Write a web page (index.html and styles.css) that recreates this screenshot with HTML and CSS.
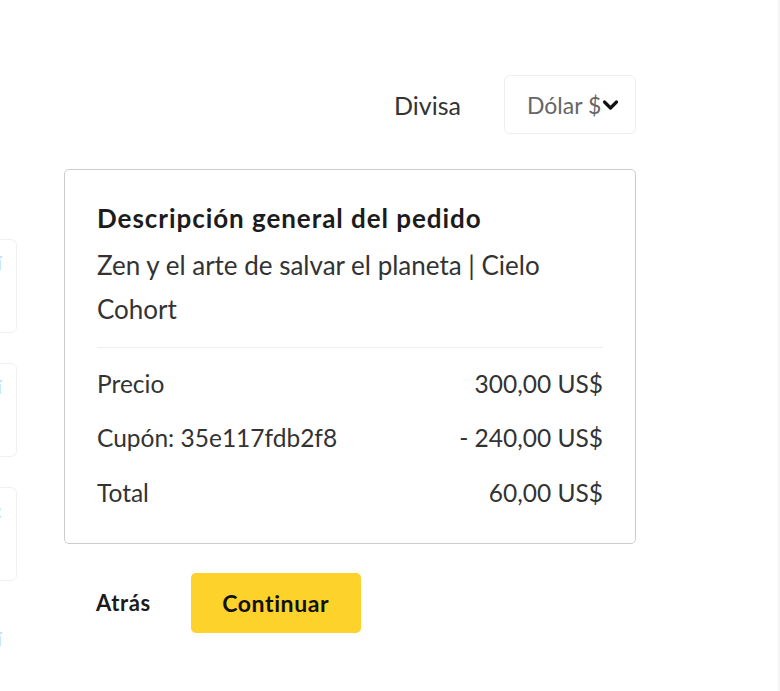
FILE: index.html
```html
<!DOCTYPE html>
<html lang="es">
<head>
<meta charset="utf-8">
<title>Pedido</title>
<link rel="stylesheet" href="styles.css">
</head>
<body>
<div class="page">
  <main class="main">
    <div class="currency-row">
      <span class="currency-label">Divisa</span>
      <div class="select">
        <span class="select-value">Dólar $</span>
        <svg class="chevron" width="17" height="12" viewBox="0 0 17 12"><path d="M2.5 3 L8.5 9 L14.5 3" fill="none" stroke="#111" stroke-width="3.2" stroke-linecap="round" stroke-linejoin="round"/></svg>
      </div>
    </div>
    <div class="content">
      <div class="side">
        <div class="side-card"><span class="side-link">Ver más aquí</span></div>
        <div class="side-card"><span class="side-link">Ver más aquí</span></div>
        <div class="side-card"><span class="side-link">Ver más:</span></div>
        <div class="side-card last"><span class="side-link">Ver más aquí</span></div>
      </div>
      <div class="column">
        <section class="card">
          <h2 class="card-title">Descripción general del pedido</h2>
          <p class="card-desc">Zen y el arte de salvar el planeta | Cielo Cohort</p>
          <hr class="divider">
          <div class="line"><span>Precio</span><span>300,00 US$</span></div>
          <div class="line"><span>Cupón: 35e117fdb2f8</span><span>- 240,00 US$</span></div>
          <div class="line"><span>Total</span><span>60,00 US$</span></div>
        </section>
        <div class="actions">
          <button class="back">Atrás</button>
          <button class="continue">Continuar</button>
        </div>
      </div>
    </div>
  </main>
  <div class="edge"></div>
</div>
</body>
</html>
```
FILE: styles.css
```css
* { box-sizing: border-box; }
html, body { margin: 0; padding: 0; background: #fff; }
body {
  font-family: Lato, "Open Sans", "Liberation Sans", sans-serif;
  color: #333;
  overflow: hidden;
}
.page {
  display: flex;
  width: 780px;
  height: 691px;
}
.main {
  flex: 1;
  overflow: hidden;
}
.edge {
  width: 2px;
  background: #f5f5f5;
}
.currency-row {
  display: flex;
  align-items: center;
  justify-content: flex-end;
  gap: 43px;
  padding-top: 75px;
  padding-right: 142px;
}
.currency-label {
  font-size: 25px;
  color: #333;
}
.select {
  width: 132px;
  height: 59px;
  border: 1px solid #eee;
  border-radius: 6px;
  display: flex;
  align-items: center;
  padding-left: 22px;
  gap: 1px;
}
.select-value {
  font-size: 23px;
  color: #666;
}
.chevron { display: block; }
.content {
  display: grid;
  grid-template-columns: 17px 572px;
  column-gap: 47px;
  margin-top: 35px;
}
.side {
  overflow: hidden;
  display: flex;
  flex-direction: column;
  align-items: flex-end;
  padding-top: 70px;
  gap: 30px;
}
.side-card {
  flex: none;
  width: 200px;
  height: 94px;
  border: 1px solid #f0f0f0;
  border-radius: 6px;
  position: relative;
  overflow: hidden;
}
.side-card.last { height: 40px; border-color: transparent; }
.side-link {
  position: absolute;
  right: 14px;
  top: 10px;
  font-size: 20px;
  color: #bcdcf5;
  white-space: nowrap;
}
.side-card.last .side-link { top: 14px; }
.card {
  border: 1px solid #ccc;
  border-radius: 5px;
  padding: 33px 32px 23px 32px;
}
.card-title {
  margin: 0;
  font-size: 26px;
  line-height: 30px;
  font-weight: 700;
  letter-spacing: 0.95px;
  color: #1c1c1c;
}
.card-desc {
  margin: 10px 0 0;
  font-size: 26px;
  line-height: 44px;
  color: #333;
}
.divider {
  border: 0;
  border-top: 1px solid #f0f0f0;
  margin: 16px 0 8px;
}
.line {
  display: flex;
  justify-content: space-between;
  align-items: center;
  height: 54.5px;
  font-size: 24.5px;
  color: #333;
}
.actions {
  display: flex;
  align-items: center;
  gap: 40px;
  margin-top: 29px;
  padding-left: 32px;
}
.back {
  font-family: inherit;
  background: none;
  border: 0;
  padding: 0;
  font-size: 22px;
  font-weight: 700;
  letter-spacing: 0.6px;
  color: #1c1c1c;
}
.continue {
  font-family: inherit;
  width: 170px;
  height: 60px;
  border: 0;
  border-radius: 5px;
  background: #fdd22b;
  font-size: 23px;
  font-weight: 700;
  letter-spacing: 0.6px;
  color: #111;
}
```
